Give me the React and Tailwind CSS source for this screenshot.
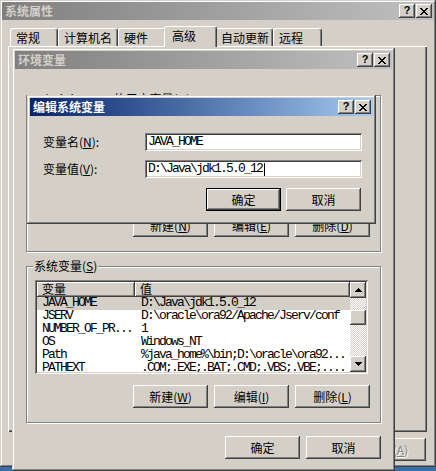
import React from 'react';

// classic 3D bevels
const raised =
  'shadow-[inset_-1px_-1px_#404040,inset_1px_1px_#ffffff,inset_-2px_-2px_#808080,inset_2px_2px_#d4d0c8]';
const frame =
  'shadow-[inset_-1px_-1px_#404040,inset_1px_1px_#d4d0c8,inset_-2px_-2px_#808080,inset_2px_2px_#ffffff]';
const sunken =
  'shadow-[inset_1px_1px_#808080,inset_-1px_-1px_#ffffff,inset_2px_2px_#404040,inset_-2px_-2px_#d4d0c8]';
const mono = "font-['Liberation_Mono',monospace] text-[13px] tracking-[-1.8px]";
const tab =
  'h-[18px] rounded-t-[3px] border-t border-l border-white border-r border-r-[#404040] shadow-[inset_-1px_0_#808080] flex items-center pl-[5px] leading-none whitespace-nowrap';

const userVars = [
  ['TEMP', '%USERPROFILE%\\Local Settings\\Temp'],
  ['TMP', '%USERPROFILE%\\Local Settings\\Temp'],
];

const sysVars = [
  ['JAVA_HOME', 'D:\\Java\\jdk1.5.0_12'],
  ['JSERV', 'D:\\oracle\\ora92/Apache/Jserv/conf'],
  ['NUMBER_OF_PR...', '1'],
  ['OS', 'Windows_NT'],
  ['Path', '%java_home%\\bin;D:\\oracle\\ora92...'],
  ['PATHEXT', '.COM;.EXE;.BAT;.CMD;.VBS;.VBE;....'],
];

function CloseGlyph() {
  const rects = [
    [0, 0, 2], [6, 0, 2], [1, 1, 2], [5, 1, 2], [2, 2, 4], [3, 3, 2],
    [2, 4, 4], [1, 5, 2], [5, 5, 2], [0, 6, 2], [6, 6, 2],
  ];
  return (
    <svg width="8" height="7" viewBox="0 0 8 7" shapeRendering="crispEdges">
      {rects.map(([x, y, w], i) => (
        <rect key={i} x={x} y={y} width={w} height="1" fill="#000" />
      ))}
    </svg>
  );
}

function Arrow({ down }) {
  const rows = [[3, 1], [2, 3], [1, 5], [0, 7]];
  return (
    <svg width="7" height="4" viewBox="0 0 7 4" shapeRendering="crispEdges">
      {rows.map(([x, w], i) => (
        <rect key={i} x={x} y={down ? 3 - i : i} width={w} height="1" fill="#000" />
      ))}
    </svg>
  );
}

function CaptionButtons() {
  return (
    <div className="flex">
      <div className={`w-[16px] h-[14px] bg-[#d4d0c8] ${raised} flex items-center justify-center font-['Liberation_Sans',sans-serif] text-[11px] font-bold text-black leading-none pb-[1px]`}>
        ?
      </div>
      <div className={`w-[16px] h-[14px] bg-[#d4d0c8] ${raised} flex items-center justify-center ml-[1px]`}>
        <CloseGlyph />
      </div>
    </div>
  );
}

function TitleBar({ title, active }) {
  return (
    <div
      className={`h-[18px] shrink-0 flex items-center justify-between pl-[3px] pr-[2px] ${
        active
          ? 'bg-linear-to-r from-[#0a246a] to-[#a6caf0] text-white'
          : 'bg-linear-to-r from-[#808080] to-[#c0c0c0] text-[#d4d0c8]'
      }`}
    >
      <span className="text-[12px] font-bold leading-none">{title}</span>
      <CaptionButtons />
    </div>
  );
}

function Btn({ children, isDefault, disabled, className = '' }) {
  const label = (
    <span className={disabled ? 'text-[#808080] [text-shadow:1px_1px_#ffffff]' : 'text-black'}>
      {children}
    </span>
  );
  if (isDefault) {
    return (
      <div className={`h-[23px] w-[75px] border border-black bg-[#d4d0c8] ${className}`}>
        <div className={`h-full ${raised} flex items-center justify-center leading-none`}>{label}</div>
      </div>
    );
  }
  return (
    <div className={`h-[23px] w-[75px] bg-[#d4d0c8] ${raised} flex items-center justify-center leading-none ${className}`}>
      {label}
    </div>
  );
}

function Mn({ k }) {
  return (
    <>
      (<u>{k}</u>)
    </>
  );
}

function Scrollbar() {
  return (
    <div className="w-[16px] shrink-0 flex flex-col">
      <div className={`h-[16px] bg-[#d4d0c8] ${raised} flex items-center justify-center`}>
        <Arrow />
      </div>
      <div className="flex-1 flex flex-col bg-[repeating-conic-gradient(#d4d0c8_0%_25%,#ffffff_0%_50%)] bg-[length:2px_2px]">
        <div className="h-[12px]" />
        <div className={`h-[15px] bg-[#d4d0c8] ${raised}`} />
      </div>
      <div className={`h-[16px] bg-[#d4d0c8] ${raised} flex items-center justify-center`}>
        <Arrow down />
      </div>
    </div>
  );
}

function ListView({ rows, selected }) {
  return (
    <div className={`w-[333px] h-[94px] bg-white ${sunken} p-[2px] flex`}>
      <div className="flex-1 min-w-0 flex flex-col overflow-hidden">
        <div className="flex h-[15px] shrink-0">
          <div className={`w-[98px] bg-[#d4d0c8] ${raised} pl-[5px] leading-[14px]`}>变量</div>
          <div className={`flex-1 bg-[#d4d0c8] ${raised} pl-[5px] leading-[14px]`}>值</div>
        </div>
        {rows.map(([name, value], i) => (
          <div
            key={name}
            className={`flex h-[13px] shrink-0 ${mono} leading-[12px] whitespace-nowrap ${
              i === selected ? 'bg-[#d4d0c8]' : ''
            }`}
          >
            <div className="w-[98px] shrink-0 pl-[5px]">{name}</div>
            <div className="flex-1 pl-[6px]">{value}</div>
          </div>
        ))}
      </div>
      <Scrollbar />
    </div>
  );
}

function GroupBox({ label, labelClass, rows, selected, buttons }) {
  return (
    <div className="relative w-[355px] h-[157px] border border-[#808080] shadow-[inset_1px_1px_#ffffff,1px_1px_#ffffff] flex flex-col items-start pl-[8px]">
      <span className={`absolute left-[6px] px-[1px] bg-[#d4d0c8] leading-[14px] whitespace-nowrap ${labelClass}`}>
        {label}
      </span>
      <div className="mt-[13px]">
        <ListView rows={rows} selected={selected} />
      </div>
      <div className="self-end mr-[10px] mt-[11px] flex gap-[6px]">
        {buttons.map((b, i) => (
          <Btn key={i}>{b}</Btn>
        ))}
      </div>
    </div>
  );
}

export default function App() {
  return (
    <div className="relative w-[436px] h-[471px] overflow-hidden bg-[#3a6ea5] font-['Noto_Sans_CJK_SC',sans-serif] text-[12px] text-black">
      {/* 系统属性 */}
      <div className={`absolute left-0 top-0 w-[436px] h-[467px] bg-[#d4d0c8] ${frame} p-[2px] flex flex-col`}>
        <TitleBar title="系统属性" />
        <div className="mt-[6px] h-[20px] pl-[8px] flex items-end">
          <div className={`${tab} w-[48px]`}>常规</div>
          <div className={`${tab} w-[60px] pl-[4px]`}>计算机名</div>
          <div className={`${tab} w-[48px]`}>硬件</div>
          <div className="relative z-10 w-[53px] h-[21px] -mb-[1px] -mx-[2px] bg-[#d4d0c8] rounded-t-[3px] border-t border-l border-white border-r border-r-[#404040] shadow-[inset_-1px_0_#808080] flex items-start pl-[7px] pt-[3px] leading-none">
            高级
          </div>
          <div className={`${tab} w-[58px] pl-[3px]`}>自动更新</div>
          <div className={`${tab} w-[49px]`}>远程</div>
        </div>
        <div className="ml-[6px] w-[419px] h-[386px] shadow-[inset_1px_1px_#ffffff,inset_-1px_-1px_#404040,inset_-2px_-2px_#808080]" />
        <div className="ml-[6px] w-[418px] mt-[6px] flex justify-end gap-[6px]">
          <Btn>确定</Btn>
          <Btn>取消</Btn>
          <Btn disabled>
            应用<Mn k="A" />
          </Btn>
        </div>
      </div>

      {/* 环境变量 */}
      <div className={`absolute z-20 left-[12px] top-[48px] w-[383px] h-[423px] bg-[#d4d0c8] ${frame} p-[3px] flex flex-col`}>
        <TitleBar title="环境变量" />
        <div className="ml-[11px] mt-[26px]">
          <GroupBox
            label={
              <>
                Administrator 的用户变量<Mn k="U" />
              </>
            }
            labelClass="top-[-4px]"
            rows={userVars}
            selected={-1}
            buttons={[
              <span>新建<Mn k="N" /></span>,
              <span>编辑<Mn k="E" /></span>,
              <span>删除<Mn k="D" /></span>,
            ]}
          />
        </div>
        <div className="ml-[11px] mt-[14px]">
          <GroupBox
            label={
              <>
                系统变量<Mn k="S" />
              </>
            }
            labelClass="top-[-8px]"
            rows={sysVars}
            selected={0}
            buttons={[
              <span>新建<Mn k="W" /></span>,
              <span>编辑<Mn k="I" /></span>,
              <span>删除<Mn k="L" /></span>,
            ]}
          />
        </div>
        <div className="mt-[13px] ml-[11px] w-[355px] flex justify-end gap-[6px]">
          <Btn>确定</Btn>
          <Btn>取消</Btn>
        </div>
      </div>

      {/* 编辑系统变量 */}
      <div className={`absolute z-30 left-[27px] top-[95px] w-[349px] h-[129px] bg-[#d4d0c8] ${frame} p-[3px] flex flex-col`}>
        <TitleBar title="编辑系统变量" active />
        <div className="mt-[17px] pl-[13px] flex items-center">
          <span className="w-[102px]">
            变量名<Mn k="N" />:
          </span>
          <div className={`w-[217px] h-[18px] bg-white ${sunken} pl-[3px] ${mono} leading-[18px]`}>
            JAVA_HOME
          </div>
        </div>
        <div className="mt-[9px] pl-[13px] flex items-center">
          <span className="w-[102px]">
            变量值<Mn k="V" />:
          </span>
          <div className={`w-[217px] h-[18px] bg-white ${sunken} pl-[3px] ${mono} leading-[18px] flex items-center`}>
            D:\Java\jdk1.5.0_12
            <span className="ml-[2px] w-[1px] h-[13px] bg-black" />
          </div>
        </div>
        <div className="mt-[10px] pr-[12px] flex justify-end gap-[5px]">
          <Btn isDefault>确定</Btn>
          <Btn>取消</Btn>
        </div>
      </div>
    </div>
  );
}
